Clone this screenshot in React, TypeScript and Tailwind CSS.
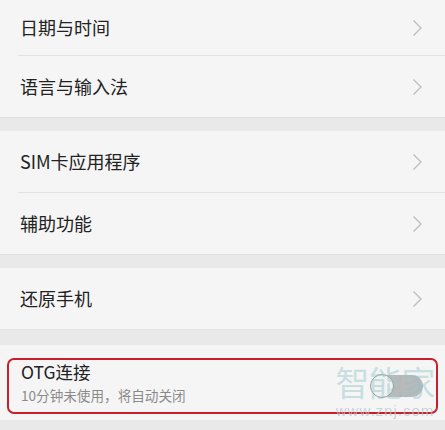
import React from "react";

function Chevron() {
  return (
    <svg width="11" height="18" viewBox="0 0 11 18" fill="none" className="shrink-0">
      <path d="M1.5 1.5 L9 9 L1.5 16.5" stroke="#bdbdbd" strokeWidth="1.3" />
    </svg>
  );
}

function Row({ label, divider = false, first = false }: { label: string; divider?: boolean; first?: boolean }) {
  return (
    <div className="bg-[#f5f5f5]">
      <div className={`flex items-center justify-between pl-5 pr-[22px] ${first ? "h-[55px]" : "h-[61px]"}`}>
        <span className="text-[18px] text-[#222]">{label}</span>
        <Chevron />
      </div>
      {divider && <div className="ml-[18px] h-px bg-[#e3e3e3]" />}
    </div>
  );
}

export default function App() {
  return (
    <div
      className="relative h-[430px] w-[445px] overflow-hidden bg-[#e9e9e9]"
      style={{ fontFamily: '"Noto Sans CJK SC", "Noto Sans", sans-serif' }}
    >
      <Row label="日期与时间" first divider />
      <Row label="语言与输入法" />
      <div className="h-[14px] border-t border-[#e0e0e0] bg-[#e9e9e9]" />
      <Row label="SIM卡应用程序" divider />
      <Row label="辅助功能" />
      <div className="h-[14px] border-t border-[#e0e0e0] bg-[#e9e9e9]" />
      <Row label="还原手机" />
      <div className="h-[16px] border-t border-[#e0e0e0] bg-[#e9e9e9]" />

      <div className="bg-[#f5f5f5] px-[7px] pt-[13px] pb-[6px]">
        <div className="flex h-[56px] items-center justify-between rounded-[7px] border-2 border-[#c8202b] pl-[12px] pr-[13px]">
          <div className="flex flex-col self-start pt-[1px]">
            <span className="text-[17.5px] leading-[22px] text-[#222]">OTG连接</span>
            <span className="mt-[2px] text-[13.6px] leading-[20px] text-[#8a8a8a]">10分钟未使用，将自动关闭</span>
          </div>
          <div className="relative h-[22px] w-[52px] rounded-full bg-[#b9b9b9]">
            <div className="absolute -left-px -top-px h-[24px] w-[24px] rounded-full border border-[#9a9a9a] bg-[#f2f2f2]" />
          </div>
        </div>
      </div>

      {/* watermark */}
      <div className="pointer-events-none absolute left-[333px] top-[364px] flex w-[104px] flex-col items-center">
        <span className="text-[34px] leading-[36px] tracking-[-1px] text-[#8cc3c9]/45">智能家</span>
        <span
          className="mt-[3px] text-[15px] leading-[16px] tracking-[1px] text-[#b4c6c8]/70"
          style={{ fontFamily: '"Liberation Sans", sans-serif' }}
        >
          www.znj.com
        </span>
      </div>
    </div>
  );
}
